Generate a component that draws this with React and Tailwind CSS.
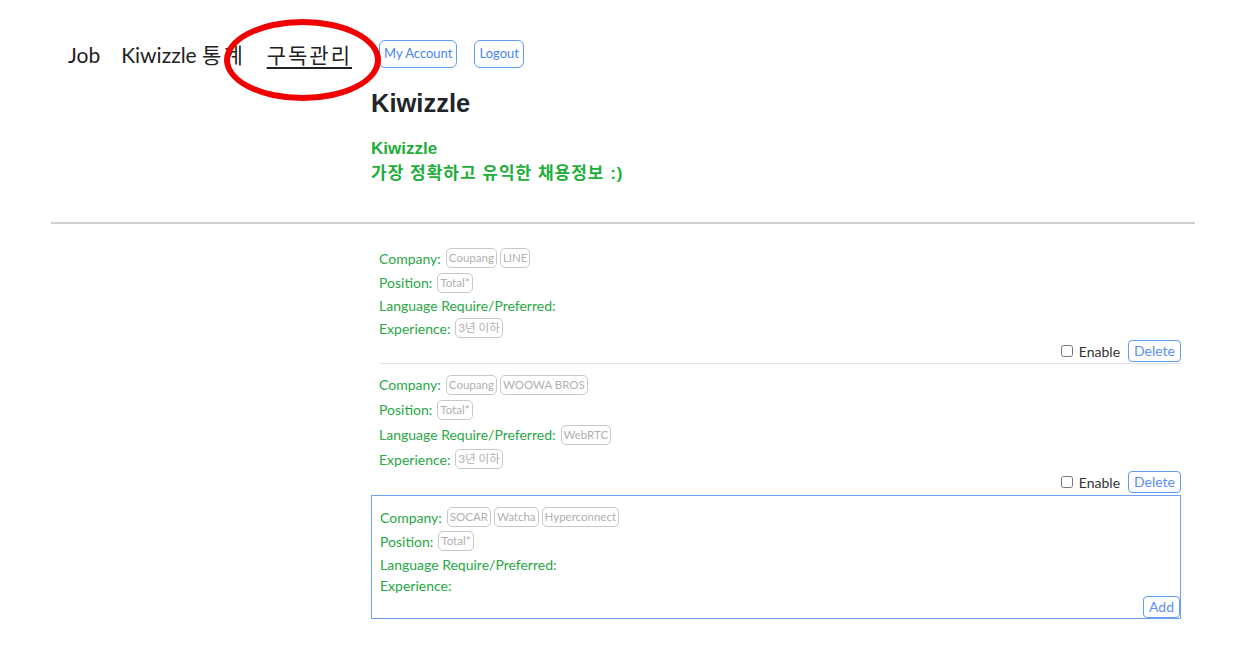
import React from "react";

const Tag = ({ children }) => (
  <span className="inline-flex items-center h-[20px] px-[2px] mr-[3px] rounded-[5px] border border-[#c8c8c8] text-[11.5px] text-[#b0b0b0] leading-none">
    {children}
  </span>
);

const Row = ({ label, tags = [], className = "" }) => (
  <div className={"flex items-center text-[14px] text-[#28a745] " + className}>
    <span className="mr-[5px]">{label}</span>
    {tags.map((t) => (
      <Tag key={t}>{t}</Tag>
    ))}
  </div>
);

const Controls = () => (
  <div className="flex items-center justify-end h-[22px]">
    <input type="checkbox" className="w-[12px] h-[12px] mr-[6px]" />
    <span className="text-[14px] text-[#333] mr-[8px]">Enable</span>
    <button className="h-[22px] px-[5px] rounded-[4px] border border-[#5b9cf5] text-[14px] text-[#5b8ff5] leading-none">
      Delete
    </button>
  </div>
);

export default function App() {
  return (
    <div className="relative w-[1260px] h-[672px] bg-white font-['Lato','Noto_Sans_CJK_KR',sans-serif] overflow-hidden">
      {/* nav */}
      <div className="flex items-center pt-[39px] pl-[68px] h-[68px]">
        <span className="text-[21px] text-[#222] mr-[21px] pt-[2px]">Job</span>
        <span className="text-[21px] text-[#222] mr-[22px] pt-[2px]">
          Kiwizzle <span className="tracking-[2px]">통계</span>
        </span>
        <span className="text-[21px] text-[#222] underline underline-offset-[4px] tracking-[2px] mr-[27px] pt-[2px]">구독관리</span>
        <button className="h-[28px] px-[4px] rounded-[6px] border border-[#5b9cf5] text-[13px] text-[#4a86f0] mr-[17px]">
          My Account
        </button>
        <button className="h-[28px] px-[4px] rounded-[6px] border border-[#5b9cf5] text-[13px] text-[#4a86f0]">
          Logout
        </button>
      </div>

      {/* red circle overlay */}
      <div className="absolute left-[224px] top-[19px] w-[157px] h-[82px] rounded-[50%] border-[6px] border-[#f00000]" />

      <div className="ml-[371px] w-[810px]">
        <h1 className="mt-[20px] text-[25.5px] font-bold text-[#212529] font-['Liberation_Sans',sans-serif] leading-[30px]">
          Kiwizzle
        </h1>
        <div className="mt-[18px] text-[17px] font-bold text-[#1fae3a] font-['Liberation_Sans','Noto_Sans_CJK_KR',sans-serif] leading-[25px]">
          <div>Kiwizzle</div>
          <div className="tracking-[1px]">가장 정확하고 유익한 채용정보 :)</div>
        </div>
      </div>

      <div className="mt-[36px] ml-[51px] w-[1144px] h-[2px] bg-[#d0d0d0]" />

      <div className="ml-[371px] w-[810px] mt-[21px]">
        {/* card 1 */}
        <div className="pl-[8px]">
          <Row label="Company:" tags={["Coupang", "LINE"]} className="h-[26px]" />
          <Row label="Position:" tags={["Total*"]} className="h-[23px]" />
          <Row label="Language Require/Preferred:" className="h-[22px]" />
          <Row label="Experience:" tags={["3년 이하"]} className="h-[24px]" />
          <Controls />
          <div className="mt-[1px] h-[1px] bg-[#e2e2e2]" />
        </div>
        {/* card 2 */}
        <div className="pl-[8px] pt-[8px]">
          <Row label="Company:" tags={["Coupang", "WOOWA BROS"]} className="h-[25px]" />
          <Row label="Position:" tags={["Total*"]} className="h-[25px]" />
          <Row label="Language Require/Preferred:" tags={["WebRTC"]} className="h-[25px]" />
          <Row label="Experience:" tags={["3년 이하"]} className="h-[24px]" />
          <Controls />
        </div>
        {/* new */}
        <div className="mt-[2px] h-[124px] border border-[#6fa0f0] pl-[8px] pt-[9px] relative">
          <Row label="Company:" tags={["SOCAR", "Watcha", "Hyperconnect"]} className="h-[24px]" />
          <Row label="Position:" tags={["Total*"]} className="h-[24px]" />
          <Row label="Language Require/Preferred:" className="h-[22px]" />
          <Row label="Experience:" className="h-[20px]" />
          <div className="flex justify-end pt-[1px]">
            <button className="h-[22px] px-[5px] rounded-[4px] border border-[#5b9cf5] text-[14px] text-[#5b8ff5] leading-none">
              Add
            </button>
          </div>
        </div>
      </div>
    </div>
  );
}
